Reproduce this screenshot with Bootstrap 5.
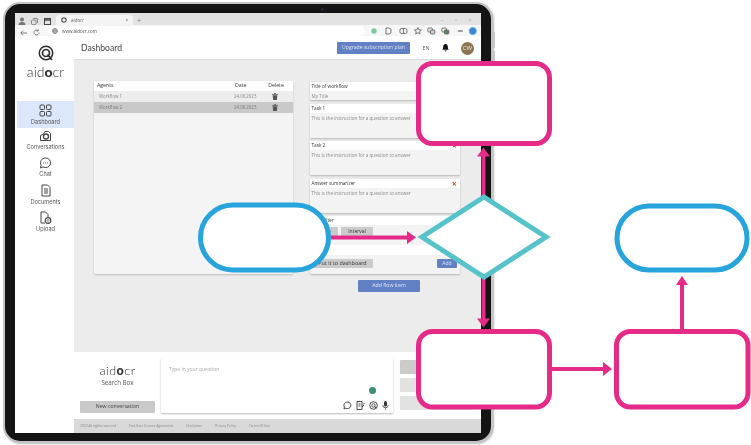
<!DOCTYPE html>
<html lang="en">
<head>
  <meta charset="UTF-8">
  <meta name="viewport" content="width=device-width, initial-scale=1">
  <title>aidocr</title>
  <link href="https://cdn.jsdelivr.net/npm/bootstrap@5.3.3/dist/css/bootstrap.min.css" rel="stylesheet">
  <style>
    body { background: #fff; font-family: "Open Sans", sans-serif; color: #333; }
    .sheet { position: relative; width: 751px; height: 445px; overflow: hidden; }
    .flow-chart { position: absolute; left: 0; top: 0; }

    .tablet { width: 490px; height: 441px; margin: 2px 0 0 3px; padding: 9px 10px 8px 10px; background: #141414; border: 2px solid #c4c4c4; border-radius: 17px; box-shadow: 1px 1px 2px #bbb; position: relative; }
    .camera { position: absolute; left: 316px; top: 4px; width: 3px; height: 3px; border-radius: 50%; background: #1c2c3c; }
    .side-key { position: absolute; left: 488px; width: 2px; background: #c8c8c8; }
    .key-a { top: 28px; height: 16px; }
    .key-b { top: 47px; height: 16px; }
    .screen { width: 466px; height: 420px; background: #fff; filter: blur(.4px); overflow: hidden; }

    .tab-strip { height: 12px; padding-top: 1px; background: #e3e3e3; }
    .tool-ico { width: 13px; }
    .tab-on { width: 77px; height: 11px; margin: 1px 0 0 2px; padding: 0 5px; background: #f4f4f4; border-radius: 3px 3px 0 0; font-size: 4.5px; color: #666; }
    .tab-plus { width: 12px; font-size: 8px; color: #888; line-height: 12px; }
    .win-btn { width: 14px; font-size: 6px; color: #aaa; text-align: center; line-height: 12px; }
    .addr-bar { height: 11px; padding: 1px 0 0 2px; background: #f6f6f6; }
    .addr-pill { width: 318px; height: 10px; margin-left: 5px; padding-left: 4px; background: #fff; border-radius: 5px; font-size: 4.5px; color: #555; gap: 4px; }

    .app { height: 397px; }
    .side { width: 59px; background: #fff; padding-left: 2px; }
    .logo-box { height: 64px; color: #2b2b2b; }
    .logo-box svg { margin-top: 9px; }
    .logo-word { font-family: Lato, sans-serif; font-weight: 300; font-size: 14px; line-height: 14px; color: #333; }
    .logo-word b { font-weight: 900; }
    .side-item { height: 27px; font-family: Inter, sans-serif; font-size: 5.6px; color: #555; text-decoration: none; padding-top: 2px; line-height: 8px; }
    .side-item svg { margin-bottom: 1px; }
    .side-on { background: #dce7fb; padding-top: 3px; }
    .side-gap { height: 1px; }

    .page-col { width: 407px; }
    .top-bar { height: 24px; background: #fff; border-bottom: 1px solid #dcdcdc; padding: 1px 7px 0; }
    .top-title { font-family: Lato, sans-serif; font-size: 8.6px; color: #444; }
    .upgrade-btn { width: 73px; height: 12px; padding: 0; background: #6280c4; border: 0; border-radius: 1px; font-size: 5.1px; color: #dfe6f6; margin-left: auto; }
    .lang { width: 32px; text-align: center; font-size: 5.4px; color: #666; }
    .avatar { width: 13px; height: 13px; margin-left: 12px; border-radius: 50%; background: #8c7550; color: #eee; font-size: 6px; }

    .main-area { height: 292px; background: #ececec; padding: 21px 0 0 20px; gap: 17px; }
    .agents { width: 199px; height: 193px; border: 0; border-radius: 1px; background: #f4f4f4; box-shadow: 0 1px 2px #bbb; overflow: hidden; }
    .agent-row { height: 11px; padding-left: 5px; font-size: 4.4px; color: #888; }
    .agent-head { height: 10px; background: #fff; padding-left: 3px; font-size: 5.2px; color: #333; }
    .agent-name { width: 135px; }
    .agent-head .agent-name { width: 138px; }
    .agent-date { width: 31px; }
    .agent-del { width: 20px; text-align: center; }
    .row-a { background: #ededed; }
    .row-b { background: #c9c9c9; color: #777; }

    .flow-col { width: 150px; margin-top: 1px; gap: 3.5px; }
    .task { border: 0; border-radius: 1px; background: #f3f3f3; box-shadow: 0 1px 2px #b5b5b5; overflow: hidden; }
    .task-t { height: 18px; }
    .task-b { height: 34px; }
    .task-f { height: 58px; }
    .task-head { height: 9px; padding: 0 1.5px; background: #fff; font-size: 4.7px; color: #333; line-height: 9px; }
    .task-text { padding: 1px 1.5px; font-size: 4.6px; color: #8a8a8a; line-height: 8px; }
    .del-x { color: #c8402e; font-size: 8px; font-weight: 700; margin-right: 2px; }
    .filter-row { height: 20px; padding: 2px 0 0 2px; gap: 3px; }
    .grey-btn { padding: 0; background: #cbcbcb; border: 0; border-radius: 1px; font-size: 5px; color: #333; height: 9px; width: 32px; line-height: 9px; }
    .date-btn { width: 26px; }
    .input-strip { height: 10px; background: #fff; }
    .dash-row { padding: 4px 3px 0 2px; }
    .wide-btn { width: 61px; font-size: 5.4px; }
    .add-btn { width: 20px; height: 9px; padding: 0; background: #6280c4; border: 0; border-radius: 1px; font-size: 5px; color: #dfe6f6; line-height: 9px; }
    .add-flow { width: 62px; height: 12px; margin: 2.5px 0 0 48px; padding: 0; background: #6280c4; border: 0; border-radius: 1px; font-size: 5.2px; color: #dfe6f6; }

    .search-area { height: 67px; background: #fff; }
    .search-left { width: 87px; padding: 13px 6px 0 6px; }
    .search-logo { font-size: 12.5px; line-height: 12px; letter-spacing: .5px; }
    .search-cap { font-size: 6.2px; line-height: 10px; margin-top: .8px; color: #555; margin-bottom: auto; }
    .new-btn { width: 75px; height: 12px; margin-bottom: 6px; padding: 0; background: #c9c9c9; border: 0; border-radius: 1px; font-size: 5.2px; color: #444; }
    .search-box { width: 232px; height: 55px; margin-top: 6px; padding: 8px 0 3px 8px; border: 0; border-radius: 1px; background: #fff; box-shadow: 0 1px 2px #bbb; font-size: 5px; color: #aaa; }
    .ok-dot { width: 7px; height: 7px; margin: 0 17px 7px auto; border-radius: 50%; background: #3c8e78; }
    .box-icons { gap: 4px; padding-right: 4px; }
    .search-right { width: 73px; margin: 8px 0 0 7px; gap: 4px; }
    .side-btn { height: 14px; padding: 0; border: 0; border-radius: 1px; background: #e2e2e2; font-size: 5px; color: #aaa; }
    .side-btn-dark { background: #cbcbcb; }

    .foot { height: 14px; background: #d9d9d9; padding-left: 6px; font-size: 3.3px; color: #888; }
    .foot span { margin-right: 13px; }
  </style>
</head>
<body>

  <div class="sheet">
    <div class="tablet">
      <div class="camera"></div>
      <div class="side-key key-a"></div>
      <div class="side-key key-b"></div>
      <div class="screen">

        <div class="tab-strip d-flex align-items-center">
          <div class="tool-ico text-center"><svg width="8" height="8" viewBox="0 0 8 8"><circle cx="4" cy="2.5" r="2" fill="#777"/><path d="M.5 8a3.5 3 0 0 1 7 0z" fill="#777"/></svg></div>
          <div class="tool-ico text-center"><svg width="7" height="7" viewBox="0 0 7 7" fill="none" stroke="#888"><rect x=".5" y="2" width="4.5" height="4.5" rx="1"/><path d="M2 .5h4.5V5"/></svg></div>
          <div class="tool-ico text-center"><svg width="7" height="7" viewBox="0 0 7 7" fill="none" stroke="#444"><rect x=".5" y=".5" width="6" height="6"/><path d="M.5 2h6" stroke-width="1.5"/></svg></div>
          <div class="tab-on d-flex align-items-center gap-1">
            <svg width="6" height="6" viewBox="0 0 6 6" fill="none" stroke="#555" stroke-width="1.2"><circle cx="3" cy="3" r="2.2"/></svg>
            <span>aidocr</span><span class="ms-auto">×</span>
          </div>
          <div class="tab-plus text-center">+</div>
          <div class="d-flex ms-auto me-1">
            <div class="win-btn">–</div><div class="win-btn">▫</div><div class="win-btn">×</div>
          </div>
        </div>

        <div class="addr-bar d-flex align-items-center">
          <div class="tool-ico text-center"><svg width="7" height="6" viewBox="0 0 7 6" fill="none" stroke="#666" stroke-width=".8"><path d="M7 3H1M3 .7 .8 3 3 5.3"/></svg></div>
          <div class="tool-ico text-center"><svg width="7" height="7" viewBox="0 0 7 7" fill="none" stroke="#666" stroke-width=".8"><path d="M6 3.5A2.5 2.5 0 1 1 5 1.5M5.2.4V2H3.6"/></svg></div>
          <div class="addr-pill d-flex align-items-center">
            <svg width="6" height="6" viewBox="0 0 6 6" fill="none" stroke="#666" stroke-width=".7"><circle cx="3" cy="3" r="2.5"/><path d="M.5 3h5M3 .5c-1.6 1.6-1.6 3.400 0 5M3 .5c1.600 1.600 1.600 3.400 0 5"/></svg>
            <span>www.aidocr.com</span>
          </div>
          <svg class="ms-1" width="112" height="10" viewBox="1 0 112 10" fill="none" stroke="#666" stroke-width=".9">
            <circle cx="6" cy="5" r="2.700" fill="#7cc8a0" stroke="none"/>
            <path d="M18 2h3l2 1v4l-2 1h-3z"/>
            <rect x="32" y="2.500" width="7" height="5" rx="1.500"/><path d="M35.500 2.500v5"/>
            <path d="M50 1.500l1 2.300 2.500.2-1.900 1.600.6 2.400-2.200-1.300-2.200 1.300.6-2.400L46.500 4 49 3.800z"/>
            <rect x="60" y="2" width="4.500" height="4" rx="1"/><rect x="62.500" y="4" width="4.500" height="4" rx="1" fill="#ccc"/>
            <rect x="74" y="2" width="4.500" height="4" rx="1"/><rect x="76.500" y="4" width="4.500" height="4" rx="1" fill="#5a8a5a"/>
            <path d="M90 5h5" stroke-width="1.200"/>
            <circle cx="105" cy="5" r="3.600" fill="#3d83d8" stroke="#58b4e0"/>
          </svg>
        </div>

        <div class="app d-flex">
          <div class="side d-flex flex-column">
            <div class="logo-box d-flex flex-column align-items-center">
              <svg width="16" height="16" viewBox="0 0 16 16" fill="none" stroke="#2b2b2b"><circle cx="8" cy="8" r="6.700" stroke-width="1.500"/><circle cx="8" cy="8" r="3.500" stroke-width="1.700"/><path d="M9.500 9.500 14 15" stroke-width="1.700"/></svg>
              <div class="logo-word mt-1">aid<b>o</b>cr</div>
            </div>
            <div class="side-gap"></div>
            <a class="side-item side-on d-flex flex-column align-items-center" href="#">
              <svg width="13" height="13" viewBox="0 0 13 13" fill="none" stroke="#444"><rect x="1" y="1" width="4.500" height="4.500" rx="1"/><rect x="7.500" y="1" width="4.500" height="4.500" rx="1"/><rect x="1" y="7.500" width="4.500" height="4.500" rx="1"/><rect x="7.500" y="7.500" width="4.500" height="4.500" rx="1"/></svg>
              Dashboard
            </a>
            <a class="side-item d-flex flex-column align-items-center" href="#">
              <svg width="13" height="12" viewBox="0 0 13 12" fill="none" stroke="#444"><path d="M1.500 10.500V5.500L4 4.500 6 1.500h3.500l2 2v7z"/><circle cx="7" cy="6.500" r="2.500" stroke-width="1.300"/></svg>
              Conversations
            </a>
            <a class="side-item d-flex flex-column align-items-center" href="#">
              <svg width="13" height="12" viewBox="0 0 13 12" fill="none" stroke="#444"><path d="M6.500 1a5 4.800 0 1 1-2.500 8.900L1.500 11l.7-2.800A5 4.800 0 0 1 6.500 1z"/><path d="M4.200 6h.8M6.100 6h.8M8 6h.8" stroke-width="1"/></svg>
              Chat
            </a>
            <a class="side-item d-flex flex-column align-items-center" href="#">
              <svg width="12" height="13" viewBox="0 0 12 13" fill="none" stroke="#444"><path d="M2 1h5.500L10 3.500V12H2z"/><path d="M4 5h4M4 7h4M4 9h4" stroke-width="1.100"/></svg>
              Documents
            </a>
            <a class="side-item d-flex flex-column align-items-center" href="#">
              <svg width="13" height="13" viewBox="0 0 13 13" fill="none" stroke="#444"><path d="M6 12H2V1h4.500L9 3.500V6"/><circle cx="9" cy="9.500" r="2.800" stroke-width="1.200"/><path d="M9 11V8.500M8 9.500l1-1 1 1" stroke-width=".7"/></svg>
              Upload
            </a>
          </div>

          <div class="page-col d-flex flex-column">
            <div class="top-bar d-flex align-items-center">
              <div class="top-title">Dashboard</div>
              <button class="btn upgrade-btn">Upgrade subscription plan</button>
              <div class="lang">EN</div>
              <svg width="7" height="8" viewBox="0 0 7 8" fill="#111"><path d="M3.500 0C2 0 1.200 1.200 1.200 2.800c0 1.600-.4 2.400-1 3h6.600c-.6-.6-1-1.400-1-3C5.800 1.200 5 0 3.500 0zM2.500 6.500h2a1 1 0 0 1-2 0z"/></svg>
              <div class="avatar d-flex align-items-center justify-content-center">CW</div>
            </div>

            <div class="main-area d-flex">
              <div class="agents card">
                <div class="agent-head d-flex align-items-center">
                  <div class="agent-name">Agents</div><div class="agent-date">Date</div><div class="agent-del">Delete</div>
                </div>
                <div class="agent-row row-a d-flex align-items-center">
                  <div class="agent-name">Workflow 1</div><div class="agent-date">24.08.2023</div>
                  <div class="agent-del"><svg width="6" height="7" viewBox="0 0 6 7" fill="#555"><path d="M0 1h6v.8H0zM2 0h2v.8H2zM.7 2.200h4.600L4.900 7H1.100z"/></svg></div>
                </div>
                <div class="agent-row row-b d-flex align-items-center">
                  <div class="agent-name">Workflow 2</div><div class="agent-date">24.08.2023</div>
                  <div class="agent-del"><svg width="6" height="7" viewBox="0 0 6 7" fill="#555"><path d="M0 1h6v.8H0zM2 0h2v.8H2zM.7 2.200h4.600L4.900 7H1.100z"/></svg></div>
                </div>
              </div>

              <div class="flow-col d-flex flex-column">
                <div class="task task-t card">
                  <div class="task-head">Title of workflow</div>
                  <div class="task-text">My Title</div>
                </div>
                <div class="task task-b card">
                  <div class="task-head d-flex justify-content-between"><span>Task 1</span><span class="del-x">×</span></div>
                  <div class="task-text">This is the instruction for a question to answer</div>
                </div>
                <div class="task task-b card">
                  <div class="task-head d-flex justify-content-between"><span>Task 2</span><span class="del-x">×</span></div>
                  <div class="task-text">This is the instruction for a question to answer</div>
                </div>
                <div class="task task-b card">
                  <div class="task-head d-flex justify-content-between"><span>Answer summarizer</span><span class="del-x">×</span></div>
                  <div class="task-text">This is the instruction for a question to answer</div>
                </div>
                <div class="task task-f card">
                  <div class="task-head">Time filter</div>
                  <div class="filter-row d-flex">
                    <button class="btn grey-btn date-btn">Date</button>
                    <button class="btn grey-btn">Interval</button>
                  </div>
                  <div class="input-strip"></div>
                  <div class="dash-row d-flex justify-content-between">
                    <button class="btn grey-btn wide-btn">Put it to dashboard</button>
                    <button class="btn add-btn">Add</button>
                  </div>
                </div>
                <button class="btn add-flow">Add flow item</button>
              </div>
            </div>

            <div class="search-area d-flex">
              <div class="search-left d-flex flex-column align-items-center">
                <div class="logo-word search-logo">aid<b>o</b>cr</div>
                <div class="search-cap">Search Box</div>
                <button class="btn new-btn">New conversation</button>
              </div>
              <div class="search-box card">
                <div class="mb-auto">Type in your question</div>
                <div class="ok-dot"></div>
                <div class="box-icons d-flex justify-content-end align-items-center">
                  <svg width="9" height="9" viewBox="0 0 9 9" fill="none" stroke="#333" stroke-width=".9"><path d="M4.500 1a3.500 3.300 0 1 1-1.800 6.200L1 8l.4-2A3.500 3.300 0 0 1 4.500 1z"/></svg>
                  <svg width="9" height="9" viewBox="0 0 9 9" fill="none" stroke="#333" stroke-width=".9"><path d="M1 .5h5v8H1zM2.500 3h2M2.500 5h2M7 3.500 8.500 2M6 6l2-2"/></svg>
                  <svg width="9" height="9" viewBox="0 0 9 9" fill="none" stroke="#333" stroke-width=".9"><circle cx="4.500" cy="4.500" r="3.800"/><circle cx="4.500" cy="4.500" r="1.700"/><path d="M5.500 5.500 7 7"/></svg>
                  <svg width="7" height="9" viewBox="0 0 7 9" fill="#333"><rect x="2" y="0" width="3" height="5.500" rx="1.500"/><path d="M.5 4h.6a2.400 2.400 0 0 0 4.800 0h.6a3 3 0 0 1-2.700 3v2H3.200V7A3 3 0 0 1 .5 4z"/></svg>
                </div>
              </div>
              <div class="search-right d-flex flex-column">
                <button class="btn side-btn side-btn-dark">Send</button>
                <button class="btn side-btn">Save</button>
                <button class="btn side-btn">Clear</button>
              </div>
            </div>

            <div class="foot d-flex align-items-center">
              <span>2023 All rights reserved</span>
              <span>End User License Agreement</span>
              <span>Disclaimer</span>
              <span>Privacy Policy</span>
              <span>Terms Of Use</span>
            </div>
          </div>
        </div>
      </div>
    </div>

    <!-- flow chart drawn over the tablet -->
    <svg class="flow-chart" width="751" height="445" viewBox="0 0 751 445">
      <g fill="none" stroke="#e62a88" stroke-width="4">
        <path d="M331 237.500h77"/>
        <path d="M483.500 196v-40"/>
        <path d="M483.500 279v40"/>
        <path d="M552 369h52"/>
      </g>
      <path d="M682 330v-46" fill="none" stroke="#e62a88" stroke-width="4"/>
      <g fill="#e62a88">
        <path d="M407 231l9 6.500-9 6.500z"/>
        <path d="M477 156.500l6.500-9 6.500 9z"/>
        <path d="M477 318.500l6.500 9 6.500-9z"/>
        <path d="M603 362l9 7-9 7z"/>
        <path d="M676 285l6 -9 6 9z"/>
      </g>
      <g fill="#fff" stroke="#e62a88" stroke-width="5">
        <rect x="418.500" y="63.500" width="131" height="80" rx="14"/>
        <rect x="418.500" y="331.500" width="131" height="75.500" rx="14"/>
        <rect x="616.500" y="331.500" width="131.500" height="75.500" rx="14"/>
      </g>
      <path d="M484 197 546 237 484 277 422 237z" fill="#fff" stroke="#56c2c9" stroke-width="5"/>
      <g fill="#fff" stroke="#27a4dc" stroke-width="5">
        <rect x="200.500" y="205" width="128" height="65" rx="32.500"/>
        <rect x="617" y="206" width="130" height="64" rx="32"/>
      </g>
    </svg>
  </div>

  <script src="https://cdn.jsdelivr.net/npm/bootstrap@5.3.3/dist/js/bootstrap.bundle.min.js"></script>
</body>
</html>
